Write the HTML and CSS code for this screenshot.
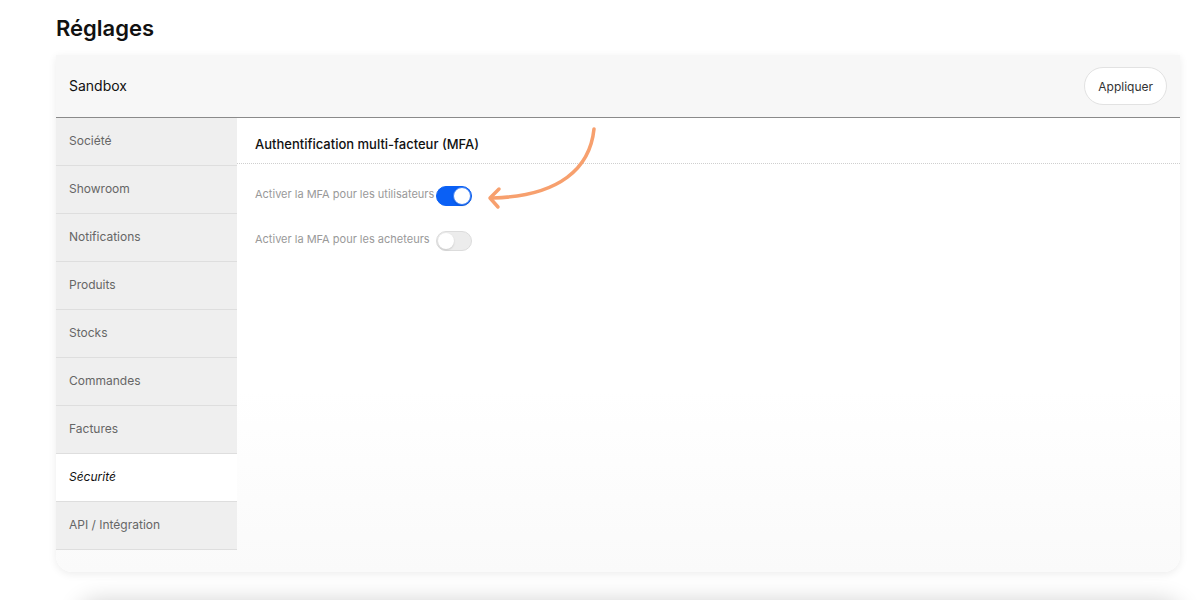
FILE: index.html
```html
<!DOCTYPE html>
<html lang="fr">
<head>
    <meta charset="UTF-8">
    <meta name="viewport" content="width=device-width, initial-scale=1.0">
    <title>Réglages</title>
    <link rel="stylesheet" href="styles.css">
</head>
<body>

    <h1 class="page-title">Réglages</h1>

    <div class="settings-card">
        <div class="card-header">
            <span class="env-name">Sandbox</span>
            <button class="apply-button">Appliquer</button>
        </div>

        <div class="card-body">
            <ul class="side-menu">
                <li class="menu-item">Société</li>
                <li class="menu-item">Showroom</li>
                <li class="menu-item">Notifications</li>
                <li class="menu-item">Produits</li>
                <li class="menu-item">Stocks</li>
                <li class="menu-item">Commandes</li>
                <li class="menu-item">Factures</li>
                <li class="menu-item active">Sécurité</li>
                <li class="menu-item">API / Intégration</li>
            </ul>

            <div class="panel">
                <div class="panel-title">Authentification multi-facteur (MFA)</div>
                <div class="panel-rows">
                    <span class="setting-label">Activer la MFA pour les utilisateurs</span>
                    <span class="toggle on"><span class="knob"></span></span>

                    <span class="setting-label">Activer la MFA pour les acheteurs</span>
                    <span class="toggle"><span class="knob"></span></span>
                </div>
            </div>
        </div>
    </div>

    <div class="next-card"></div>

    <!-- annotation arrow pointing at the toggle -->
    <svg class="hint-arrow" width="1200" height="600" viewBox="0 0 1200 600">
        <path d="M594 129 C590 168 560 196 493 198" fill="none" stroke="#f7a06e" stroke-width="3.5" stroke-linecap="round"/>
        <path d="M499 189 L490 198 L498 207" fill="none" stroke="#f7a06e" stroke-width="3.5" stroke-linecap="round" stroke-linejoin="round"/>
    </svg>

</body>
</html>
```

FILE: styles.css
```css
body {
    margin: 0;
    padding: 0 20px 0 56px;
    font-family: Inter, "Open Sans", Arial, sans-serif;
    background-color: #ffffff;
    color: #111;
    overflow: hidden;
    height: 600px;
}

.page-title {
    margin: 0;
    padding-top: 15px;
    height: 55px;
    box-sizing: border-box;
    font-size: 22px;
    font-weight: 600;
    line-height: 27px;
}

.settings-card {
    width: 1124px;
    background-color: #ffffff;
    border-radius: 0 0 16px 16px;
    box-shadow: 0 2px 8px rgba(0, 0, 0, 0.08);
    overflow: hidden;
}

.card-header {
    height: 62px;
    display: flex;
    align-items: center;
    justify-content: space-between;
    padding: 0 13px;
    background-color: #f7f7f7;
    border-bottom: 1px solid #8a8a8a;
}

.env-name {
    font-size: 14px;
    color: #111;
    margin-top: -2px;
}

.apply-button {
    height: 38px;
    padding: 0 13px;
    border-radius: 19px;
    border: 1px solid #e2e2e2;
    background-color: #ffffff;
    font-family: inherit;
    font-size: 12px;
    color: #333;
    cursor: pointer;
}

.card-body {
    display: flex;
    height: 454px;
    background: linear-gradient(to bottom, #ffffff 60%, #fafafa);
}

.side-menu {
    list-style: none;
    margin: 0;
    padding: 0;
    width: 181px;
    align-self: flex-start;
}

.menu-item {
    display: flex;
    align-items: center;
    padding-left: 13px;
    padding-bottom: 2px;
    height: 45px;
    font-size: 12px;
    color: #666;
    background-color: #efefef;
    border-bottom: 1px solid #dedede;
}

.menu-item.active {
    background-color: #ffffff;
    color: #111;
    font-style: italic;
}

.panel {
    flex: 1;
}

.panel-title {
    height: 46px;
    box-sizing: border-box;
    display: flex;
    align-items: center;
    padding: 6px 0 0 18px;
    font-size: 13px;
    font-weight: 500;
    color: #111;
    border-bottom: 1px dotted #cfcfcf;
}

/* label column + toggle column, so the toggles line up */
.panel-rows {
    display: grid;
    grid-template-columns: max-content max-content;
    column-gap: 2px;
    row-gap: 25px;
    align-items: center;
    padding: 22px 0 0 18px;
}

.setting-label {
    font-size: 11px;
    color: #999;
    position: relative;
    top: -2px;
}

.toggle {
    width: 36px;
    height: 20px;
    border-radius: 10px;
    background-color: #ececec;
    border: 1px solid #dcdcdc;
    box-sizing: border-box;
    display: flex;
    align-items: center;
    padding: 1px;
}

.toggle .knob {
    width: 16px;
    height: 16px;
    border-radius: 50%;
    background-color: #ffffff;
    box-shadow: 0 1px 2px rgba(0, 0, 0, 0.15);
}

.toggle.on {
    background-color: #0a60f5;
    border-color: #0a60f5;
    justify-content: flex-end;
}

.toggle.on .knob {
    border: 1px solid #3b7ff7;
    box-sizing: border-box;
    width: 18px;
    height: 18px;
    margin-right: -1px;
}

.next-card {
    width: 1100px;
    height: 100px;
    margin: 32px 0 0 24px;
    border-radius: 16px;
    background-color: #ffffff;
    box-shadow: 0 -2px 24px rgba(0, 0, 0, 0.2);
}

.hint-arrow {
    position: absolute;
    top: 0;
    left: 0;
    pointer-events: none;
}
```
